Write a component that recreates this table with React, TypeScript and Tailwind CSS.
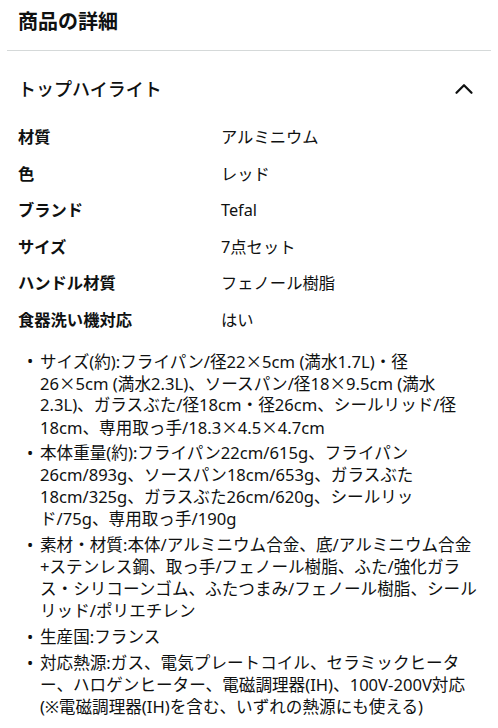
import { ChevronUp } from 'lucide-react'

const specs: [string, string][] = [
  ['材質', 'アルミニウム'],
  ['色', 'レッド'],
  ['ブランド', 'Tefal'],
  ['サイズ', '7点セット'],
  ['ハンドル材質', 'フェノール樹脂'],
  ['食器洗い機対応', 'はい'],
]

// each bullet is kept as its rendered lines so the wraps match
const bullets: string[][] = [
  [
    'サイズ(約):フライパン/径22×5cm (満水1.7L)・径',
    '26×5cm (満水2.3L)、ソースパン/径18×9.5cm (満水',
    '2.3L)、ガラスぶた/径18cm・径26cm、シールリッド/径',
    '18cm、専用取っ手/18.3×4.5×4.7cm',
  ],
  [
    '本体重量(約):フライパン22cm/615g、フライパン',
    '26cm/893g、ソースパン18cm/653g、ガラスぶた',
    '18cm/325g、ガラスぶた26cm/620g、シールリッ',
    'ド/75g、専用取っ手/190g',
  ],
  [
    '素材・材質:本体/アルミニウム合金、底/アルミニウム合金',
    '+ステンレス鋼、取っ手/フェノール樹脂、ふた/強化ガラ',
    'ス・シリコーンゴム、ふたつまみ/フェノール樹脂、シール',
    'リッド/ポリエチレン',
  ],
  ['生産国:フランス'],
  [
    '対応熱源:ガス、電気プレートコイル、セラミックヒータ',
    'ー、ハロゲンヒーター、電磁調理器(IH)、100V-200V対応',
    '(※電磁調理器(IH)を含む、いずれの熱源にも使える)',
  ],
]

// the multiplication sign is drawn wide in the original, so take it from the CJK font
function Line({ text }: { text: string }) {
  const parts = text.split('×')
  return (
    <span className="block h-[22px]">
      {parts.map((p, k) => (
        <span key={k}>
          {k > 0 && <span className="font-['Noto_Sans_CJK_JP',sans-serif]">×</span>}
          {p}
        </span>
      ))}
    </span>
  )
}

export default function App() {
  return (
    <div className="min-h-[728px] bg-white text-[#0f1111] font-['Noto_Sans','Noto_Sans_CJK_JP',sans-serif]">
      <div className="px-[18px] pt-[8px] pb-[14px]">
        <h1 className="text-[20px] font-bold leading-[28px]">商品の詳細</h1>
      </div>
      <div className="mx-[7px] h-px bg-[#d5d9d9]" />

      <div className="flex items-center justify-between pl-[18px] pr-[19px] pt-[23px] pb-[15px]">
        <h2 className="text-[18px] font-medium leading-[28px]">トップハイライト</h2>
        <ChevronUp className="h-[30px] w-[30px]" strokeWidth={1.8} />
      </div>

      <div className="px-[18px]">
        {specs.map(([label, value]) => (
          <div key={label} className="flex h-[36.5px] items-center text-[16.3px]">
            <span className="w-[203px] font-bold">{label}</span>
            <span>{value}</span>
          </div>
        ))}
      </div>

      <ul className="mt-[12px] pl-[27px] pr-[10px] text-[16.6px] leading-[22px]">
        {bullets.map((lines, i) => (
          <li key={i} className="mb-[4px] flex whitespace-nowrap">
            <span className="w-[13px] shrink-0">•</span>
            <span>
              {lines.map((line, j) => (
                <Line key={j} text={line} />
              ))}
            </span>
          </li>
        ))}
      </ul>
    </div>
  )
}
